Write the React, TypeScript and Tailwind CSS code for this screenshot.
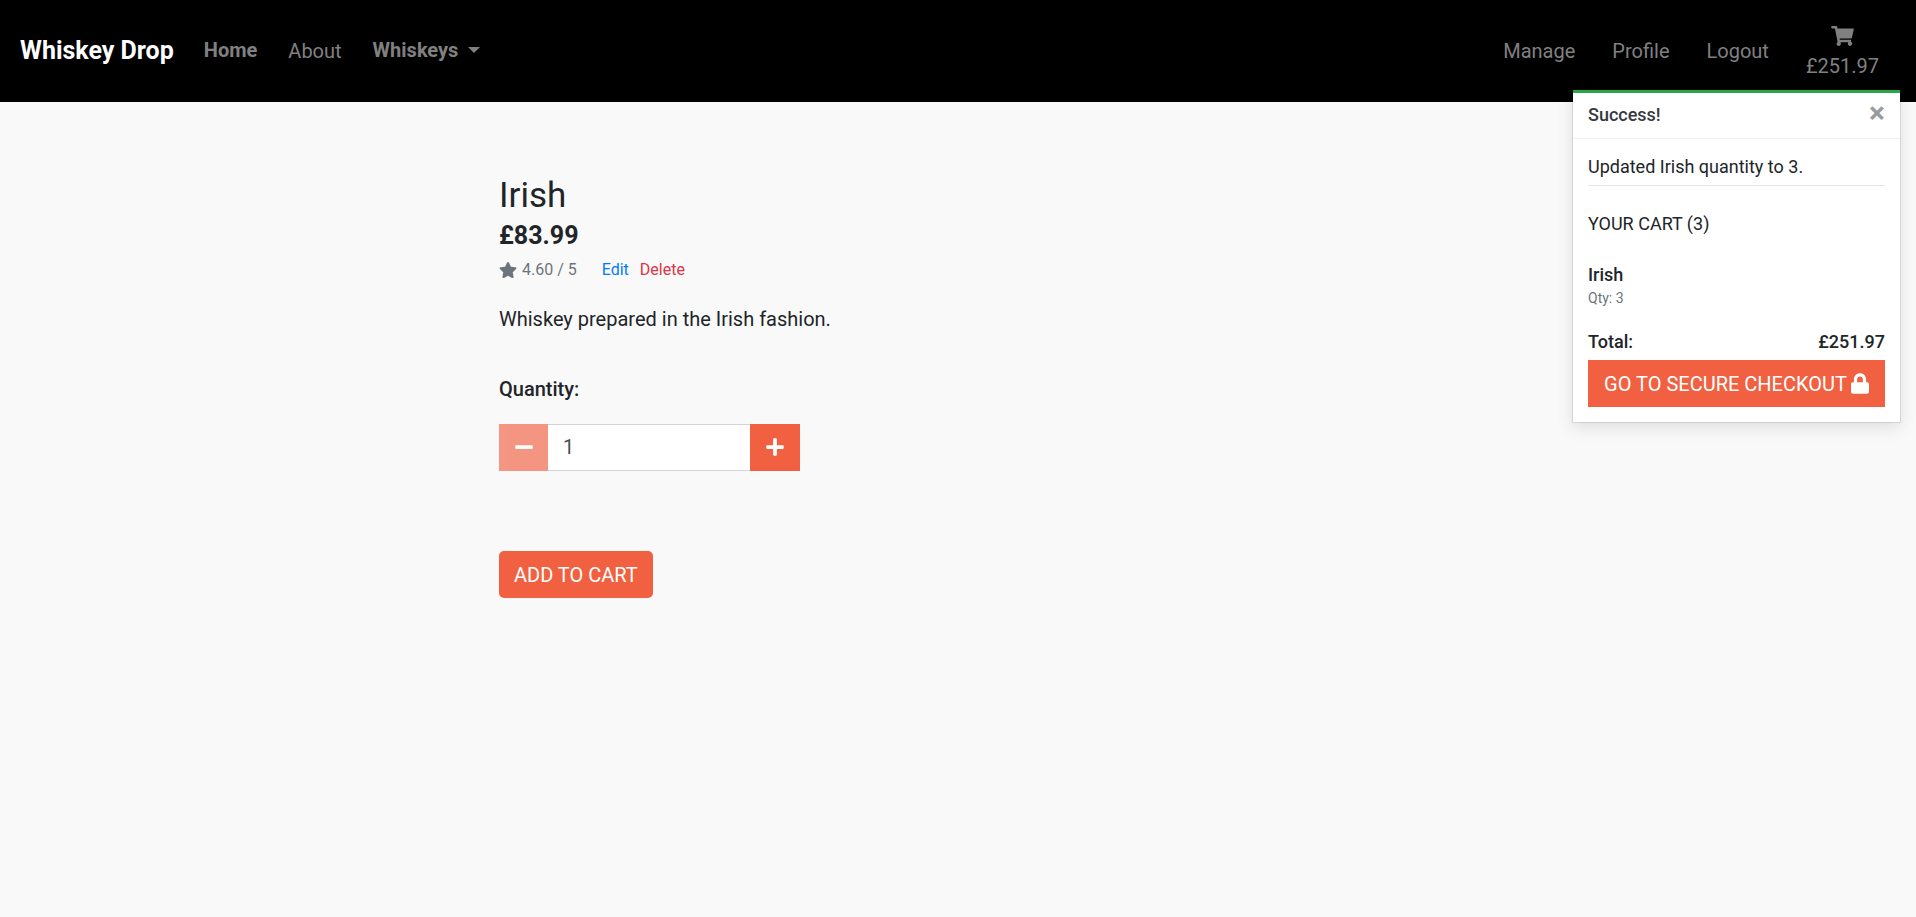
import { useState } from "react";
import { FaLock, FaMinus, FaPlus, FaShoppingCart, FaStar } from "react-icons/fa";

const UNIT_PRICE = 83.99;

function NavBar() {
  return (
    <nav className="flex h-[102px] items-center bg-black pr-[22px] pl-5 text-[20px] leading-[30px] text-[#808080]">
      <a href="#" className="mr-[30px] text-[25px] font-bold text-white">Whiskey Drop</a>
      <div className="flex items-center gap-[31px]">
        <a href="#home" className="pb-0.5 font-bold">Home</a>
        <a href="#about">About</a>
        <button type="button" className="flex items-center gap-2.5 pb-0.5 font-bold">
          Whiskeys
          <svg viewBox="0 0 12 6" className="h-1.5 w-3" fill="currentColor" aria-hidden="true">
            <path d="M0 0h12L6 6z" />
          </svg>
        </button>
      </div>
      <div className="ml-auto flex items-center gap-[37px] pr-[15px]">
        <a href="#manage">Manage</a>
        <a href="#profile">Profile</a>
        <a href="#logout">Logout</a>
        <a href="#cart" className="flex flex-col items-center">
          <span className="flex h-[30px] items-center">
            <FaShoppingCart className="h-5 w-[23px]" />
          </span>
          £251.97
        </a>
      </div>
    </nav>
  );
}

function CartToast({ onClose }: { onClose: () => void }) {
  return (
    <aside
      role="status"
      className="absolute top-[90px] right-[15px] w-[329px] border border-t-0 border-black/10 bg-white bg-clip-padding text-[18px] leading-[26px] text-[#212529] shadow-[0_5px_15px_rgba(0,0,0,0.1)]"
    >
      <div className="h-[3px] bg-[#28a745]" />
      <div className="flex h-[46px] items-center justify-between border-b border-black/5 px-[15px] pb-0.5">
        <strong className="font-medium text-[#343a40]">Success!</strong>
        <button
          type="button"
          aria-label="Close"
          onClick={onClose}
          className="mb-1 text-[30px] leading-[30px] font-bold text-[#999c9e]"
        >
          ×
        </button>
      </div>
      <div className="p-[15px]">
        <p>Updated Irish quantity to 3.</p>
        <hr className="mt-[5px] border-black/10" />
        <p className="mt-[25px]">YOUR CART (3)</p>
        <p className="mt-[25px] font-medium">Irish</p>
        <p className="text-[14px] leading-[20px] text-[#6c757d]">Qty: 3</p>
        <p className="mt-[21px] flex justify-between font-medium">
          <span>Total:</span>
          <span>£251.97</span>
        </p>
        <a
          href="#checkout"
          className="mt-[5px] flex h-[47px] items-center justify-center gap-1 bg-[#f16141] text-[20px] whitespace-nowrap text-white"
        >
          GO TO SECURE CHECKOUT
          <FaLock viewBox="0 0 448 512" className="h-[21px] w-[18px]" />
        </a>
      </div>
    </aside>
  );
}

export default function App() {
  const [quantity, setQuantity] = useState(1);
  const [toastOpen, setToastOpen] = useState(true);

  return (
    <div className="relative min-h-screen bg-[#f9f9f9] font-[Roboto,sans-serif] text-[#212529]">
      <NavBar />
      {toastOpen && <CartToast onClose={() => setToastOpen(false)} />}
      <main className="mx-auto max-w-[1140px] px-[111px] pt-[73px] text-[20px] leading-[30px]">
        <h1 className="text-[35px] leading-[42px]">Irish</h1>
        <p className="text-[25px] leading-[37px] font-bold">£{UNIT_PRICE}</p>
        <p className="flex h-8 items-center text-[16px] leading-[24px] text-[#6c757d]">
          <FaStar className="mr-[5px] size-[18px]" />
          4.60 / 5
          <a href="#edit" className="ml-[25px] text-[#007bff]">Edit</a>
          <a href="#delete" className="ml-[11px] text-[#dc3545]">Delete</a>
        </p>
        <p className="mt-[18px]">Whiskey prepared in the Irish fashion.</p>
        <form onSubmit={(event) => event.preventDefault()}>
          <label htmlFor="quantity" className="mt-10 block font-medium">Quantity:</label>
          <div className="mt-5 flex h-[47px] w-[301px]">
            <button
              type="button"
              aria-label="Decrease quantity"
              disabled={quantity <= 1}
              onClick={() => setQuantity(quantity - 1)}
              className="flex w-[49px] items-center justify-center bg-[#f16141] pb-0.5 text-white disabled:opacity-65"
            >
              <FaMinus className="size-5" />
            </button>
            <input
              id="quantity"
              type="text"
              inputMode="numeric"
              value={quantity}
              onChange={(event) => setQuantity(Number(event.target.value) || 1)}
              className="min-w-0 flex-1 border border-x-0 border-[#ced4da] bg-white px-[15px] pb-0.5 text-[#495057]"
            />
            <button
              type="button"
              aria-label="Increase quantity"
              onClick={() => setQuantity(quantity + 1)}
              className="flex w-[50px] items-center justify-center bg-[#f16141] pb-0.5 text-white"
            >
              <FaPlus className="size-5" />
            </button>
          </div>
          <button
            type="submit"
            className="mt-20 h-[47px] rounded-[5px] bg-[#f16141] px-[15px] text-white"
          >
            ADD TO CART
          </button>
        </form>
      </main>
    </div>
  );
}
